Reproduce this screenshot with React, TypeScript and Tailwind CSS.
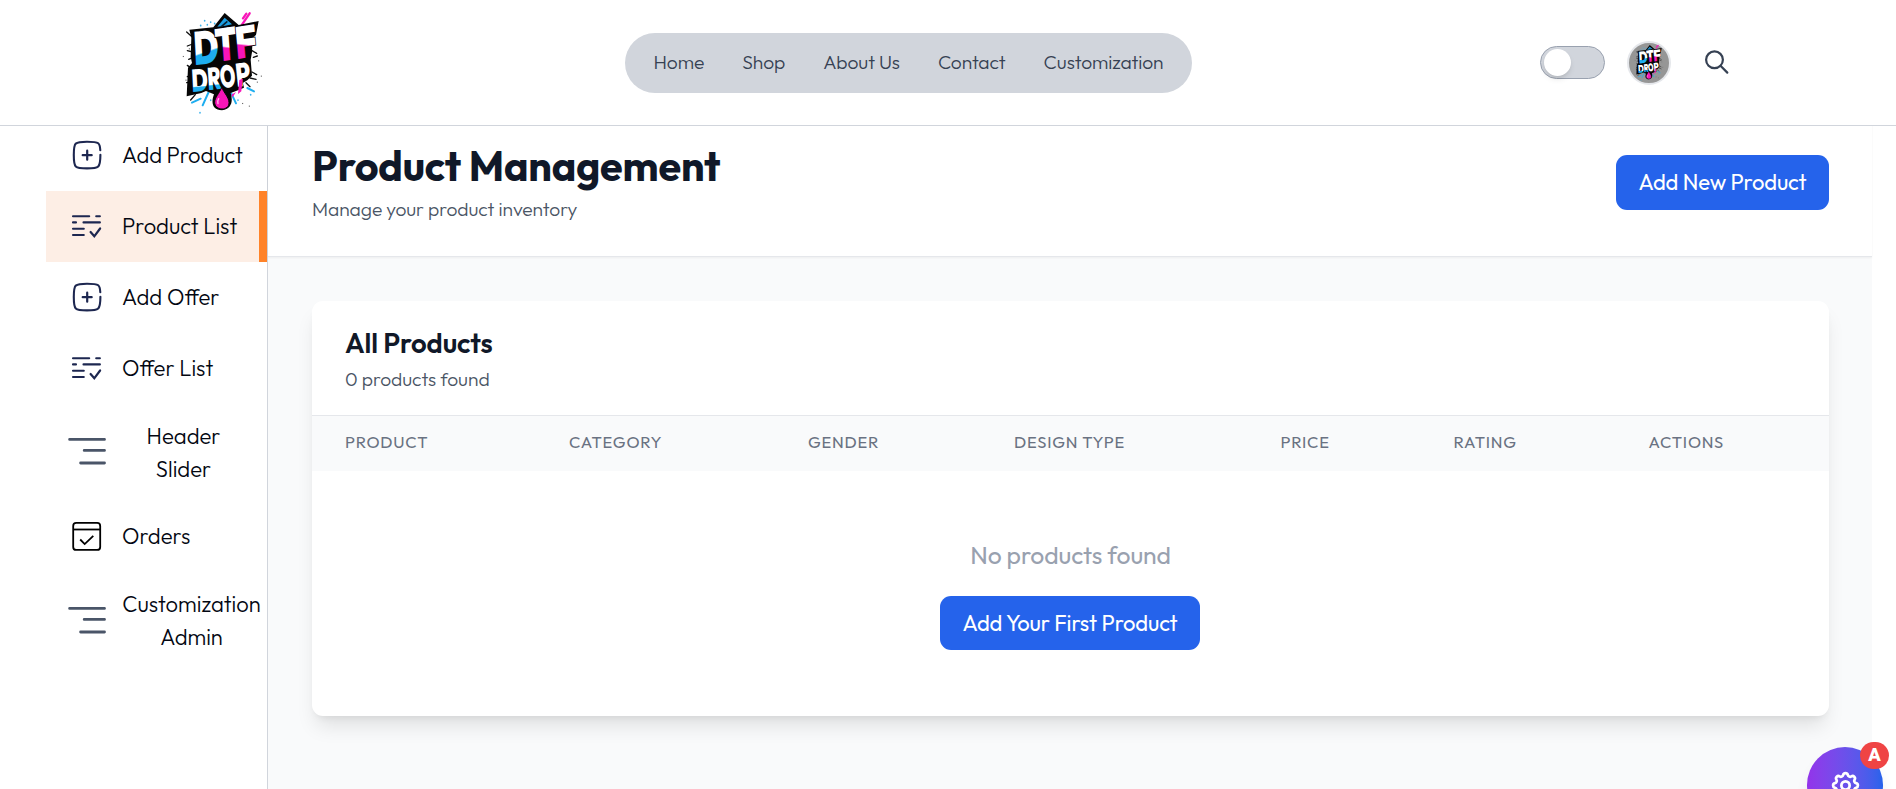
import React from 'react';

function Logo({ className }: { className?: string }) {
  return (
    <svg viewBox="60 30 255 315" className={className} aria-label="DTF Drop">
      <defs>
        <linearGradient id="cyanFill" x1="0" y1="0" x2="0.1" y2="1">
          <stop offset="0.62" stopColor="#fff" />
          <stop offset="0.65" stopColor="#1eaef0" />
        </linearGradient>
        <linearGradient id="pinkFill" x1="0" y1="0" x2="-0.1" y2="1">
          <stop offset="0.5" stopColor="#fff" />
          <stop offset="0.53" stopColor="#f815b8" />
        </linearGradient>
        <linearGradient id="cyanLow" x1="0" y1="0" x2="0" y2="1">
          <stop offset="0.66" stopColor="#fff" />
          <stop offset="0.69" stopColor="#1eaef0" />
        </linearGradient>
      </defs>
      <g strokeLinecap="round" fill="none">
        <path d="M269 40 246 74M259 41l-10 14" stroke="#f815b8" strokeWidth="7" />
        <path d="M146 276 128 316M122 296l-26 12M214 280l14 30M262 264l20 10" stroke="#1eaef0" strokeWidth="6" />
        <path d="M134 62v1M152 66v1M122 76v1M164 70v1M142 74v1M120 338v1M152 300v1M234 300v1M272 284v1" stroke="#3fb3ec" strokeWidth="5" />
        <path d="M96 110 80 96M98 132l-16 6M98 156l-16-4M100 172l-14 6M96 206l-14-10M94 226l-12 4M96 246l-16 2M276 152l14 8M280 172l12-4M276 216l14 8M270 234l18 4M258 248l12 12M106 284l-14 16" stroke="#111" strokeWidth="4" />
        <path d="M70 169v1M304 228v1M88 146v1M296 182v1M292 246v1M268 318v1M78 240v1M248 310v1" stroke="#555" strokeWidth="3" />
      </g>
      <path d="M160 82 194 39l42 36 60-12-8 42-10 8-2 44-4 22 4 48-14 14-14 8 4 14-24 10-16 6c8 26 2 48-26 52-28-2-34-22-24-48l-24-10-14 6-44 10 4-86 12-14-4-18 2-58-6-24z" fill="#060606" />
      <path d="m172 80 22-27 22 20-20 4z" fill="#1c9fe4" />
      <path d="m184 80 18-16" stroke="#0a2233" strokeWidth="5" fill="none" />
      <g fontFamily="Outfit, Lato, sans-serif" fontWeight="900" fill="#fff" stroke="#060606" strokeWidth="5" style={{ paintOrder: 'stroke' }}>
        <text transform="translate(103 196) rotate(-6) skewX(-3) scale(.7 1)" fontSize="140" fill="url(#cyanFill)">D</text>
        <text transform="translate(169 186) rotate(-8) skewX(-4) scale(.72 1)" fontSize="138" fill="url(#pinkFill)">T</text>
        <text transform="translate(229 178) rotate(-9) skewX(-4) scale(.8 1)" fontSize="134" fill="url(#pinkFill)">F</text>
        <text transform="translate(96 276) rotate(-5) skewX(-2) scale(.68 1)" fontSize="94" fill="url(#cyanLow)">D</text>
        <text transform="translate(144 271) rotate(-6) skewX(-2) scale(.66 1)" fontSize="94" fill="url(#cyanLow)">R</text>
        <text transform="translate(184 265) rotate(-7) scale(.6 1)" fontSize="94">O</text>
        <text transform="translate(230 261) rotate(-8) skewX(-2) scale(.7 1)" fontSize="98">P</text>
      </g>
      <path d="m238 240 10-4-4 38-10 8zM214 284l14-8-10 16z" fill="#f815b8" />
      <path d="M185 262c7 17 22 30 22 46 0 12-9 19-21 19s-22-8-22-20c0-14 14-27 21-45z" fill="#f815b8" stroke="#060606" strokeWidth="3" />
      <path d="M176 296c-3 5-4 10-2 15" stroke="#ffb4ea" strokeWidth="4" fill="none" strokeLinecap="round" />
    </svg>
  );
}

const AddIcon = () => (
  <svg viewBox="0 0 38.5 38.5" className="size-[38.5px]" fill="none" stroke="#1d2750" strokeWidth="2.1" strokeLinecap="round">
    <path d="M32.3 14.2C32.1 10.5 31.8 8.6 30.2 7.3 28.4 5.9 24 5.7 19 5.7s-9.2.2-11.2 1.9C6 9.3 5.8 13.5 5.8 19s.2 9.8 2 11.5 6.2 1.9 11.2 1.9 9.4-.2 11.2-1.9c1.9-1.800 2.200-5.500 2.200-11.700" />
    <path d="M19.2 14.7v9M14.7 19.2h9" strokeWidth="2.2" />
  </svg>
);

const ListIcon = () => (
  <svg viewBox="0 0 38.5 38.5" className="size-[38.5px]" fill="none" stroke="#1d2750" strokeWidth="2.1" strokeLinecap="round">
    <path d="M5 9.2h16.2M28.2 9.2h3.7M5 15.4h3M15.5 15.4h16.4M5 21.8h10.8M5 28h10.8" />
    <path d="m22.6 25 3.7 4.3 5.8-7.8" strokeWidth="2.2" />
  </svg>
);

const BarsIcon = () => (
  <svg viewBox="0 0 38.5 38.5" className="size-[38.5px]" fill="none" stroke="#4a5568" strokeWidth="2.8" strokeLinecap="round">
    <path d="M1.6 6.4h34.9M16.2 17.4h20.3M12.6 30h23.9" />
  </svg>
);

const OrdersIcon = () => (
  <svg viewBox="0 0 38.5 38.5" className="size-[38.5px]" fill="none" stroke="#000" strokeWidth="1.8">
    <rect x="5.2" y="5.9" width="27" height="27" rx="3" />
    <path d="M5.2 12.5h27" />
    <path d="m12.200 22.500 4.500 4.600 8.600-8.200" />
  </svg>
);

const nav = ['Home', 'Shop', 'About Us', 'Contact', 'Customization'];

const links = [
  { label: 'Add Product', Icon: AddIcon, row: 'h-[71px]', text: 'whitespace-nowrap tracking-[-0.1px]' },
  { label: 'Product List', Icon: ListIcon, row: 'h-[71px] border-r-8 border-[#ff8329] bg-[#fdeee5]', text: 'whitespace-nowrap tracking-[-0.05px]' },
  { label: 'Add Offer', Icon: AddIcon, row: 'h-[71px]', text: 'whitespace-nowrap' },
  { label: 'Offer List', Icon: ListIcon, row: 'h-[71px]', text: 'whitespace-nowrap' },
  { label: 'Header Slider', Icon: BarsIcon, row: 'h-[97px]', text: 'w-[123px] px-[20px] text-center' },
  { label: 'Orders', Icon: OrdersIcon, row: 'h-[71px]', text: 'whitespace-nowrap' },
  { label: 'Customization Admin', Icon: BarsIcon, row: 'h-[98px]', text: 'w-[139px] text-center' },
];

const columns = ['Product', 'Category', 'Gender', 'Design Type', 'Price', 'Rating', 'Actions'];

function Header() {
  return (
    <header className="relative z-10 flex h-[126px] shrink-0 items-center border-b border-[#d1d5dc] bg-white">
      <div className="w-[625px] pl-[180px]">
        <Logo className="h-[105px] w-[85px]" />
      </div>
      <nav className="flex h-[60px] w-[567px] items-center justify-center gap-[38px] rounded-full bg-[#d1d5dc] text-[19.25px] font-[350] tracking-[-0.1px] text-[#364153]">
        {nav.map((n) => (
          <a key={n}>{n}</a>
        ))}
      </nav>
      <div className="ml-[348px] flex items-center">
        <div className="flex h-[33px] w-[65px] items-center rounded-full border border-[#99a1af] bg-[#d1d5dc] pl-[3px]">
          <span className="size-[27px] rounded-full bg-white shadow-md" />
        </div>
        <div className="ml-[22px] flex size-[44px] items-center justify-center rounded-full border-2 border-[#e5e7eb] bg-[#969696]">
          <Logo className="h-[37px] w-[30px]" />
        </div>
        <svg viewBox="0 0 27 27" className="ml-[33px] size-[27px]" fill="none" stroke="#364153" strokeWidth="2.2">
          <circle cx="10.500" cy="10.800" r="8.400" />
          <path d="m16.500 16.800 6.800 6.800" strokeLinecap="round" />
        </svg>
      </div>
    </header>
  );
}

function Sidebar() {
  return (
    <aside className="flex w-[268px] shrink-0 flex-col border-r border-[#d1d5dc] pl-[46px] pt-[12px]">
      {links.map(({ label, Icon, row, text }) => (
        <a key={label} className={`flex shrink-0 items-center gap-[15.5px] pl-[22px] font-[330] leading-[33px] text-[#030712] ${row}`}>
          <span className="shrink-0">
            <Icon />
          </span>
          <span className={`shrink-0 ${text}`}>{label}</span>
        </a>
      ))}
    </aside>
  );
}

export default function App() {
  return (
    <div className="relative flex h-[789px] flex-col overflow-hidden bg-white font-[Outfit,Lato,sans-serif] text-[22px] leading-[33px] text-[#101828]">
      <Header />
      <div className="-mt-[18px] flex min-h-0 flex-1">
        <Sidebar />
        <main className="w-[1604px] shrink-0 bg-[#f9fafb]">
          <div className="flex h-[149px] items-center justify-between border-b border-[#e5e7eb] bg-white pl-[44px] pr-[43px] shadow-xs">
            <div className="pt-px">
              <h1 className="text-[41.25px] font-[680] leading-[49.5px] tracking-[-0.15px]">Product Management</h1>
              <p className="mt-[5px] text-[19.25px] font-[350] leading-[27.5px] tracking-[-0.08px] text-[#4a5565]">Manage your product inventory</p>
            </div>
            <button className="h-[55px] w-[213px] rounded-[11px] bg-[#2563eb] font-[450] tracking-[-0.15px] text-white">Add New Product</button>
          </div>
          <section className="ml-[44px] mr-[43px] mt-[44px] h-[415px] overflow-hidden rounded-[11px] bg-white shadow-[0_14px_20px_-4px_rgba(0,0,0,0.1),0_5px_8px_-5px_rgba(0,0,0,0.1)]">
            <div className="h-[115px] border-b border-[#e5e7eb] px-[33px] pt-[23px]">
              <h2 className="text-[27.5px] font-[560] leading-[38.5px] tracking-[-0.1px]">All Products</h2>
              <p className="mt-[3px] text-[19.25px] font-[350] leading-[27.5px] tracking-[-0.05px] text-[#4a5565]">0 products found</p>
            </div>
            <div className="grid h-[55px] grid-cols-[224px_239px_206px_266.5px_173px_195px_213.5px] items-center bg-[#f9fafb] pb-[3px] text-[16.5px] font-[450] uppercase leading-[22px] tracking-[0.047em] text-[#6a7282]">
              {columns.map((c) => (
                <span key={c} className="pl-[33px]">{c}</span>
              ))}
            </div>
            <div className="flex flex-col items-center pt-[65px]">
              <p className="text-[24.75px] font-[370] leading-[38.5px] tracking-[-0.1px] text-[#99a1af]">No products found</p>
              <button className="mr-px mt-[21.5px] h-[54px] w-[260px] rounded-[11px] bg-[#2563eb] pt-px font-[450] tracking-[-0.15px] text-white">Add Your First Product</button>
            </div>
          </section>
        </main>
      </div>
      <button className="absolute left-[1807px] top-[747px] flex size-[76px] items-center justify-center rounded-full bg-linear-to-r from-[#9333ea] to-[#2563eb] shadow-lg">
        <svg viewBox="0 0 24 24" className="size-[33px]" fill="none" stroke="#fff" strokeWidth="2" strokeLinecap="round" strokeLinejoin="round">
          <path d="M10.325 4.317c.426-1.756 2.924-1.756 3.350 0a1.724 1.724 0 002.573 1.066c1.543-.94 3.310.826 2.370 2.370a1.724 1.724 0 001.065 2.572c1.756.426 1.756 2.924 0 3.350a1.724 1.724 0 00-1.066 2.573c.94 1.543-.826 3.310-2.370 2.370a1.724 1.724 0 00-2.572 1.065c-.426 1.756-2.924 1.756-3.350 0a1.724 1.724 0 00-2.573-1.066c-1.543.94-3.310-.826-2.370-2.370a1.724 1.724 0 00-1.065-2.572c-1.756-.426-1.756-2.924 0-3.350a1.724 1.724 0 001.066-2.573c-.94-1.543.826-3.310 2.370-2.370.996.608 2.296.070 2.572-1.065z" />
          <circle cx="12" cy="12" r="3" />
        </svg>
        <span className="absolute -right-[6px] -top-[5px] flex h-[27px] w-[29px] items-center justify-center rounded-full bg-[#ef4444] pb-[2px] text-[17.5px] font-extrabold leading-none text-white">A</span>
      </button>
    </div>
  );
}
